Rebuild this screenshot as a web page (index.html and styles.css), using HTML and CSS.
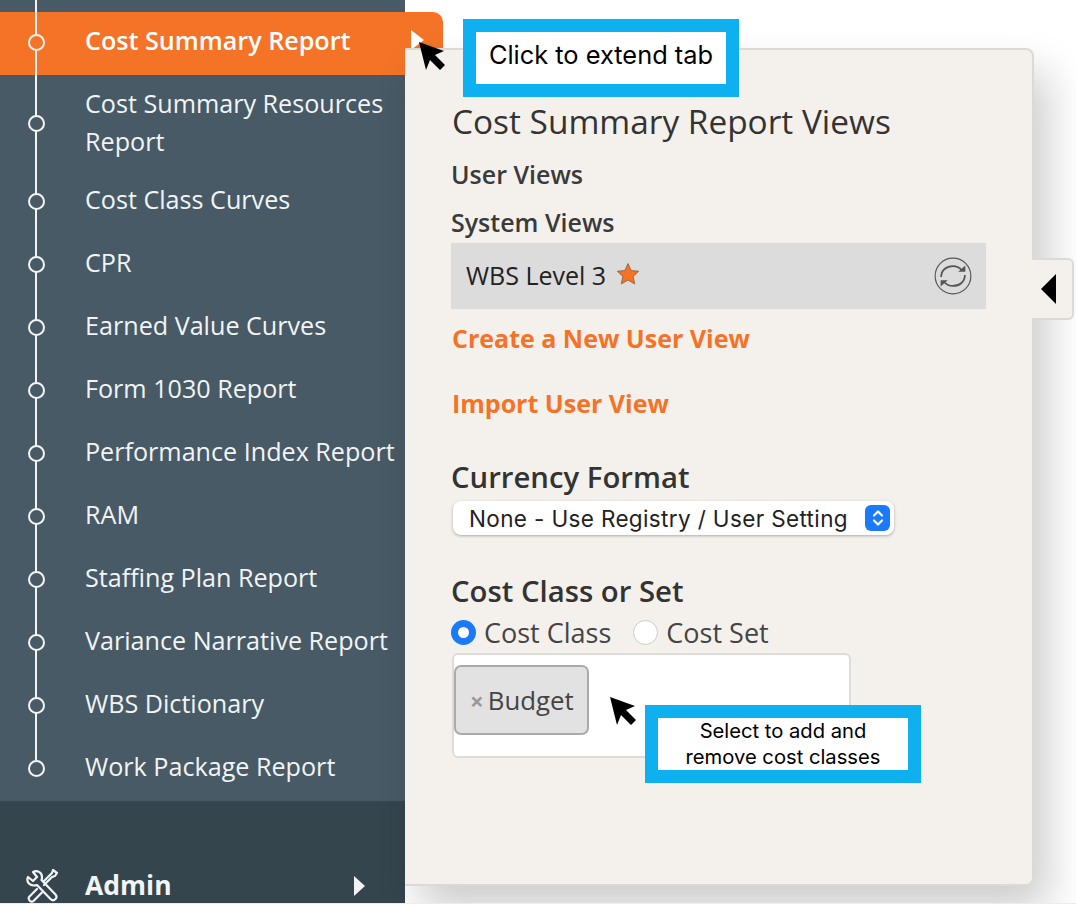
FILE: index.html
```html
<!DOCTYPE html>
<html lang="en">
<head>
<meta charset="utf-8">
<title>Cost Summary Report Views</title>
<link rel="stylesheet" href="styles.css">
</head>
<body>
<div class="app">
  <aside class="sidebar">
    <ul class="reports">
      <li class="report active"><span class="dot"></span>Cost Summary Report<span class="caret"></span></li>
      <li class="report double"><span class="dot"></span>Cost Summary Resources Report</li>
      <li class="report"><span class="dot"></span>Cost Class Curves</li>
      <li class="report"><span class="dot"></span>CPR</li>
      <li class="report"><span class="dot"></span>Earned Value Curves</li>
      <li class="report"><span class="dot"></span>Form 1030 Report</li>
      <li class="report"><span class="dot"></span>Performance Index Report</li>
      <li class="report"><span class="dot"></span>RAM</li>
      <li class="report"><span class="dot"></span>Staffing Plan Report</li>
      <li class="report"><span class="dot"></span>Variance Narrative Report</li>
      <li class="report"><span class="dot"></span>WBS Dictionary</li>
      <li class="report"><span class="dot"></span>Work Package Report</li>
    </ul>
    <div class="admin">
      <svg class="admin-icon" viewBox="0 0 34 34" fill="none" stroke="#f2f4f5" stroke-width="2.2" stroke-linejoin="round" stroke-linecap="round">
        <path d="M3 8l5 4 4-4-4-5c4-2 9 0 9 5 0 1 0 2-.5 3L30 25c2 2 1.500 4 .5 5s-3 2-5 0L12 16c-1 .5-2 .5-3 .5-5 0-8-4-6-8.500z"/>
        <path d="M19 12l8-8 1-3 4 3-2 3-3 1-8 8M12 20l-8 8c-1 2 0 3 1 4s3 1 4-.5l8-8"/>
      </svg>
      <span class="admin-label">Admin</span>
      <span class="admin-caret"></span>
    </div>
  </aside>
  <main class="stage">
    <section class="panel">
      <h1 class="title">Cost Summary Report Views</h1>
      <h2 class="label first">User Views</h2>
      <h2 class="label second">System Views</h2>
      <div class="view-row">
        <span class="view-name">WBS Level 3</span>
        <svg class="star" viewBox="0 0 24 24"><path d="M12 1.500l3.200 7 7.500.8-5.600 5.100 1.600 7.500-6.700-3.800-6.700 3.800 1.600-7.500L1.300 9.300l7.500-.8z" fill="#f47327" stroke="#8a5a36" stroke-width=".8"/></svg>
        <svg class="sync" viewBox="0 0 40 40" fill="none" stroke="#555" stroke-width="1.200">
          <circle cx="20" cy="20" r="18.800"/>
          <path d="M7.500 21c0-7 5.500-11.500 12.500-11.500 4 0 7 1.500 9.500 4.500" stroke-width="1.800"/>
          <path d="M32.500 19c0 7-5.500 11.500-12.500 11.500-4 0-7-1.500-9.500-4.500" stroke-width="1.800"/>
          <path d="M25.500 15.500h7.500v-6.500zM14.500 24.500H7v6.500z" fill="#555" stroke="none"/>
        </svg>
      </div>
      <a class="action create">Create a New User View</a>
      <a class="action import">Import User View</a>
      <h2 class="heading currency">Currency Format</h2>
      <div class="select">
        <span class="select-text">None - Use Registry / User Setting</span>
        <span class="stepper">
          <svg viewBox="0 0 14 20" fill="none" stroke="#fff" stroke-width="2.200" stroke-linecap="round" stroke-linejoin="round"><path d="M3 7.500L7 3.500l4 4M3 12.500l4 4 4-4"/></svg>
        </span>
      </div>
      <h2 class="heading cost">Cost Class or Set</h2>
      <div class="radios">
        <span class="radio on"></span><span class="radio-text">Cost Class</span>
        <span class="radio off"></span><span class="radio-text">Cost Set</span>
      </div>
      <div class="multi">
        <div class="chip"><span class="chip-x">×</span><span class="chip-text">Budget</span></div>
      </div>
      <div class="side-tab"><span class="side-caret"></span></div>
    </section>
    <div class="callout callout-top">Click to extend tab</div>
    <div class="callout callout-bottom">Select to add and<br>remove cost classes</div>
    <svg class="cursor cursor-top" viewBox="0 0 26 28"><path d="M0 0l25 9-9 4 10 10-5 5-10-10-4 10z" fill="#000"/></svg>
    <svg class="cursor cursor-bottom" viewBox="0 0 26 28"><path d="M0 0l25 9-9 4 10 10-5 5-10-10-4 10z" fill="#000"/></svg>
  </main>
</div>
</body>
</html>
```
FILE: styles.css
```css
* { box-sizing: border-box; }
html, body { margin: 0; padding: 0; background: #fff; }
body { font-family: "Open Sans", sans-serif; width: 1076px; height: 908px; overflow: hidden; }

.app { display: flex; height: 904px; overflow: hidden; position: relative; border-bottom: 1px solid #ececec; }

.sidebar { width: 405px; flex: none; background: #475a66; display: flex; flex-direction: column; color: #f2f4f5; }
.reports { list-style: none; margin: 0; padding: 12px 0 0; position: relative; height: 801px; flex: none; }
.reports::before { content: ""; position: absolute; z-index: 1; left: 35px; top: 0; height: 760px; width: 2px; background: #f2f4f5; }

.report { position: relative; padding: 9px 0 16px 85px; font-size: 25.150px; line-height: 38px; height: 63px; white-space: nowrap; }
.report.double { height: 96px; white-space: normal; padding-right: 10px; }
.report.active { width: 443px; background: #f47327; font-weight: 600; border-radius: 0 10px 0 0; color: #fff; }

.dot { position: absolute; z-index: 2; left: 28px; top: 22px; width: 17px; height: 17px; border-radius: 50%; border: 2px solid #f2f4f5; background: #475a66; }
.double .dot { top: 40px; }
.active .dot { background: #f47327; }

.caret { position: absolute; left: 411px; top: 18px; border-left: 13px solid #fff; border-top: 10px solid transparent; border-bottom: 10px solid transparent; }

.admin { flex: 1; background: #34454d; display: flex; align-items: flex-end; padding: 0 0 0 25px; position: relative; }
.admin-icon { width: 34px; height: 34px; flex: none; }
.admin-label { margin-left: 26px; font-size: 26.500px; line-height: 36px; font-weight: 700; }
.admin-caret { margin: 0 0 7px 182px; border-left: 11px solid #f2f4f5; border-top: 10px solid transparent; border-bottom: 10px solid transparent; }

.stage { flex: 1; padding-top: 48px; position: relative; }

.panel { position: relative; z-index: 1; width: 629px; height: 838px; background: #f4f1ed; border: 2px solid #dcdad7; border-left: 0; border-radius: 0 8px 8px 0; padding: 49px 0 0 46px; color: #333; box-shadow: 14px 24px 44px rgba(0,0,0,.2); }

.title { margin: 0 0 0 1px; font-size: 33.400px; line-height: 44px; font-weight: 400; color: #333; white-space: nowrap; }
.label { margin: 0; font-size: 25px; line-height: 34px; font-weight: 600; color: #3a3a3a; }
.label.first { margin-top: 14px; }
.label.second { margin-top: 14px; }

.view-row { margin: 4px 0 0; width: 535px; height: 66px; background: #dcdcdc; display: flex; align-items: center; padding: 0 14px 0 15px; }
.view-name { font-size: 25px; line-height: 32px; margin-top: -2px; color: #222; }
.star { width: 24px; height: 24px; margin: -4px 0 0 10px; flex: none; }
.sync { width: 38px; height: 38px; margin-left: auto; flex: none; }

.action { display: block; margin-left: 1px; font-size: 25px; line-height: 34px; font-weight: 700; color: #f47327; }
.create { margin-top: 12px; }
.import { margin-top: 31px; }

.heading { margin: 0; font-size: 29.300px; line-height: 38px; font-weight: 600; color: #333; }
.currency { margin-top: 38px; }
.cost { margin-top: 37px; }

.select { margin: 5px 0 0 2px; width: 441px; height: 34px; background: #fff; border-radius: 8px; box-shadow: 0 1px 3px rgba(0,0,0,.3); display: flex; align-items: center; padding: 0 4px 0 16px; }
.select-text { font-family: Inter, sans-serif; font-size: 22.500px; letter-spacing: .36px; color: #222; white-space: nowrap; }
.stepper { margin-left: auto; width: 25px; height: 26px; background: #1a7af8; border-radius: 6px; display: flex; align-items: center; justify-content: center; }
.stepper svg { width: 14px; height: 20px; }

.radios { margin-top: 4px; height: 36px; display: flex; align-items: center; }
.radio { width: 25px; height: 25px; border-radius: 50%; flex: none; }
.radio.on { background: #fff; border: 7px solid #1a7af8; }
.radio.off { background: #fff; border: 1px solid #ccc; margin-left: 22px; }
.radio-text { margin-left: 8px; font-size: 27px; color: #444; }

.multi { margin: 3px 0 0 1px; width: 399px; height: 105px; background: #fff; border: 2px solid #dedcd9; border-radius: 6px; padding: 10px 0 0; }
.chip { width: 135px; height: 70px; background: #e2e2e2; border: 2px solid #aaa; border-radius: 7px; display: flex; align-items: center; padding-left: 14px; }
.chip-x { font-size: 24px; font-weight: 700; color: #999; }
.chip-text { font-size: 25.800px; color: #444; margin-left: 4px; }

.side-tab { position: absolute; left: 627px; top: 208px; width: 42px; height: 62px; background: #f4f1ed; border: 2px solid #dcdad7; border-left: 0; border-radius: 0 6px 6px 0; display: flex; align-items: center; padding-left: 9px; }
.side-caret { border-right: 15px solid #000; border-top: 15px solid transparent; border-bottom: 15px solid transparent; }

.callout { position: absolute; z-index: 3; background: #fff; border: 13px solid #0fb0f0; width: 276px; height: 78px; color: #000; text-align: center; font-family: Inter, sans-serif; white-space: nowrap; }
.callout-top { left: 58px; top: 19px; font-size: 25.400px; line-height: 46px; }
.callout-bottom { left: 240px; top: 705px; font-size: 20.200px; line-height: 26px; }

.cursor { position: absolute; z-index: 4; width: 26px; height: 28px; }
.cursor-top { left: 14px; top: 42px; }
.cursor-bottom { left: 205px; top: 697px; }
```
